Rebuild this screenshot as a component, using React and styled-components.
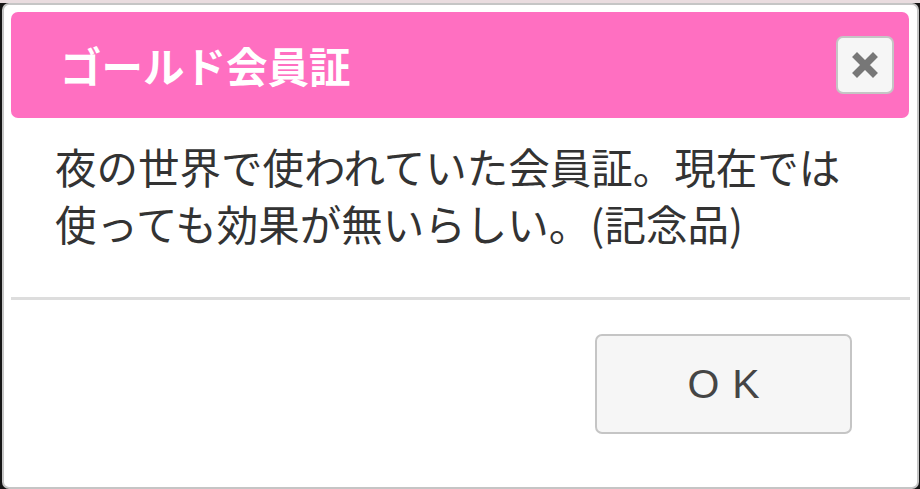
import React from "react";
import styled, { createGlobalStyle } from "styled-components";

const Global = createGlobalStyle`
  html, body { margin: 0; padding: 0; }
  body {
    background: linear-gradient(#e9dcdf 0 3px, #151515 3px);
    font-family: "Noto Sans CJK JP", "Noto Sans", sans-serif;
    width: 920px;
    height: 489px;
    overflow: hidden;
  }
`;

const Dialog = styled.div`
  box-sizing: border-box;
  margin: 3px 1px 0 2px;
  height: 486px;
  background: #fff;
  border: 2px solid #c5c5c5;
  border-radius: 7px;
  padding: 7px 8px 0 7px;
  display: flex;
  flex-direction: column;
`;

const TitleBar = styled.div`
  height: 106px;
  background: #ff6fc1;
  border-radius: 7px;
  display: flex;
  align-items: center;
  justify-content: space-between;
  padding: 0 15px 0 49px;
  box-sizing: border-box;
`;

const Title = styled.span`
  color: #fff;
  font-weight: 700;
  font-size: 41.5px;
  letter-spacing: 0;
`;

const CloseButton = styled.button`
  width: 58px;
  height: 58px;
  box-sizing: border-box;
  border: 2px solid #c5c5c5;
  border-radius: 7px;
  background: #f6f6f6;
  padding: 0;
  display: flex;
  align-items: center;
  justify-content: center;
`;

const Body = styled.div`
  padding: 20px 40px 0 44px;
  height: 179px;
  box-sizing: border-box;
  color: #333;
  font-size: 41.5px;
  line-height: 57px;
`;

const Divider = styled.div`
  height: 3px;
  background: #dddddd;
  margin: 0 -1px 0 0;
`;

const Footer = styled.div`
  display: flex;
  justify-content: flex-end;
  padding: 34px 57px 0 0;
`;

const OkButton = styled.button`
  width: 257px;
  height: 100px;
  box-sizing: border-box;
  border: 2px solid #c5c5c5;
  border-radius: 7px;
  background: #f6f6f6;
  color: #454545;
  font-family: "Liberation Sans", Arial, sans-serif;
  font-size: 41px;
  letter-spacing: 13px;
  padding: 0 0 0 13px;
`;

export default function App() {
  return (
    <>
      <Global />
      <Dialog>
        <TitleBar>
          <Title>ゴールド会員証</Title>
          <CloseButton aria-label="close">
            <svg width="28" height="28" viewBox="0 0 28 28">
              <path
                d="M6 6 L22 22 M22 6 L6 22"
                stroke="#777"
                strokeWidth="7"
                strokeLinecap="square"
              />
            </svg>
          </CloseButton>
        </TitleBar>
        <Body>
          夜の世界で使われていた会員証。現在では
          <br />
          使っても効果が無いらしい。(記念品)
        </Body>
        <Divider />
        <Footer>
          <OkButton>OK</OkButton>
        </Footer>
      </Dialog>
    </>
  );
}
